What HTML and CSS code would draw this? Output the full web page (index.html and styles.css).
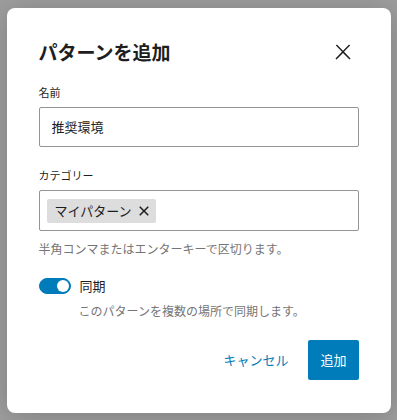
FILE: index.html
```html
<!DOCTYPE html>
<html lang="ja">
<head>
  <meta charset="UTF-8">
  <meta name="viewport" content="width=device-width, initial-scale=1">
  <title>パターンを追加</title>
  <link rel="stylesheet" href="styles.css">
</head>
<body>
  <div class="modal" role="dialog" aria-labelledby="modal-title">
    <div class="modal-header">
      <h1 class="modal-title" id="modal-title">パターンを追加</h1>
      <button type="button" class="btn-close" aria-label="閉じる">
        <svg width="24" height="24" viewBox="0 0 24 24" aria-hidden="true"><path d="M13 11.8l6.1-6.3-1-1-6.1 6.2-6.1-6.2-1 1 6.1 6.3-6.5 6.7 1 1 6.5-6.6 6.5 6.6 1-1z"/></svg>
      </button>
    </div>
    <form class="modal-form" autocomplete="off">
      <div class="field">
        <label class="field-label" for="name">名前</label>
        <input class="text-input" type="text" id="name" value="推奨環境">
      </div>
      <div class="field field-tokens">
        <label class="field-label" for="category">カテゴリー</label>
        <div class="token-input">
          <span class="token">
            <span class="token-text">マイパターン</span>
            <button type="button" class="token-remove" aria-label="削除">
              <svg width="24" height="24" viewBox="0 0 24 24" aria-hidden="true"><path d="M12 13.06l3.712 3.713 1.061-1.06L13.061 12l3.712-3.712-1.06-1.06L12 10.938 8.288 7.227l-1.061 1.06L10.939 12l-3.712 3.712 1.06 1.061L12 13.061z"/></svg>
            </button>
          </span>
          <input class="token-field" type="text" id="category">
        </div>
        <p class="help">半角コンマまたはエンターキーで区切ります。</p>
      </div>
      <div class="toggle-field">
        <div class="toggle-row">
          <span class="toggle is-checked"><span class="toggle-thumb"></span></span>
          <span class="toggle-label">同期</span>
        </div>
        <p class="help help-toggle">このパターンを複数の場所で同期します。</p>
      </div>
      <div class="modal-footer">
        <button type="button" class="btn btn-tertiary">キャンセル</button>
        <button type="submit" class="btn btn-primary">追加</button>
      </div>
    </form>
  </div>
</body>
</html>
```

FILE: styles.css
```css
* { box-sizing: border-box; }
body {
  margin: 0;
  min-height: 100vh;
  background: #9e9e9e;
  font-family: "Noto Sans CJK JP", "Noto Sans", sans-serif;
  color: #1e1e1e;
  display: flex;
  align-items: center;
  justify-content: center;
}
.modal {
  width: 384px;
  height: 405px;
  background: #fff;
  border-radius: 8px;
  box-shadow: 0 3px 30px rgba(0,0,0,0.2);
  padding: 30px 32px 32px 32px;
}
.modal-header {
  display: flex;
  align-items: center;
  justify-content: space-between;
  height: 28px;
  margin-bottom: 18px;
}
.modal-title {
  margin: 0;
  font-size: 19px;
  line-height: 28px;
  font-weight: 700;
}
.btn-close {
  border: none;
  background: none;
  padding: 0;
  margin-right: 4px;
  width: 24px; height: 24px;
  display: flex;
  fill: #1e1e1e;
  cursor: pointer;
}
.field-label {
  display: block;
  font-size: 11px;
  line-height: 16px;
  margin-bottom: 7px;
}
.text-input {
  display: block;
  width: 100%;
  height: 40px;
  border: 1px solid #949494;
  border-radius: 2px;
  padding: 0 12px;
  font-family: inherit;
  font-size: 13px;
  color: #1e1e1e;
}
.field-tokens { margin-top: 20px; }
.token-input {
  display: flex;
  align-items: center;
  height: 41px;
  border: 1px solid #949494;
  border-radius: 2px;
  padding: 8px 7px 7px 7px;
}
.token {
  display: flex;
  align-items: center;
  height: 24px;
  background: #ddd;
  border-radius: 2px;
  padding-left: 8px;
  font-size: 13px;
  line-height: 24px;
}
.token-remove {
  border: none;
  background: none;
  padding: 0;
  width: 24px; height: 24px;
  display: flex;
  fill: #1e1e1e;
}
.token-field {
  flex: 1;
  min-width: 0;
  border: none;
  outline: none;
  font-family: inherit;
  font-size: 13px;
}
.help {
  margin: 10px 0 0 0;
  font-size: 12px;
  line-height: 16px;
  color: #757575;
}
.toggle-field { margin-top: 21px; }
.toggle-row {
  display: flex;
  align-items: center;
  gap: 8px;
}
.toggle {
  position: relative;
  width: 32px;
  height: 16px;
  border-radius: 8px;
  background: #fff;
  border: 1px solid #1e1e1e;
}
.toggle.is-checked {
  background: #007cba;
  border-color: #007cba;
}
.toggle-thumb {
  position: absolute;
  top: 1px;
  left: 1px;
  width: 12px;
  height: 12px;
  border-radius: 50%;
  background: #1e1e1e;
}
.toggle.is-checked .toggle-thumb {
  left: auto;
  right: 1px;
  background: #fff;
}
.toggle-label {
  font-size: 13px;
  line-height: 16px;
  margin-left: 1px;
}
.help-toggle {
  margin: 9px 0 0 40px;
}
.modal-footer {
  display: flex;
  justify-content: flex-end;
  gap: 8px;
  margin-top: 21px;
}
.btn {
  height: 40px;
  padding: 0 12px;
  border: none;
  border-radius: 2px;
  font-family: inherit;
  font-size: 13px;
  cursor: pointer;
}
.btn-tertiary {
  background: none;
  color: #007cba;
}
.btn-primary {
  background: #007cba;
  color: #fff;
}
```
